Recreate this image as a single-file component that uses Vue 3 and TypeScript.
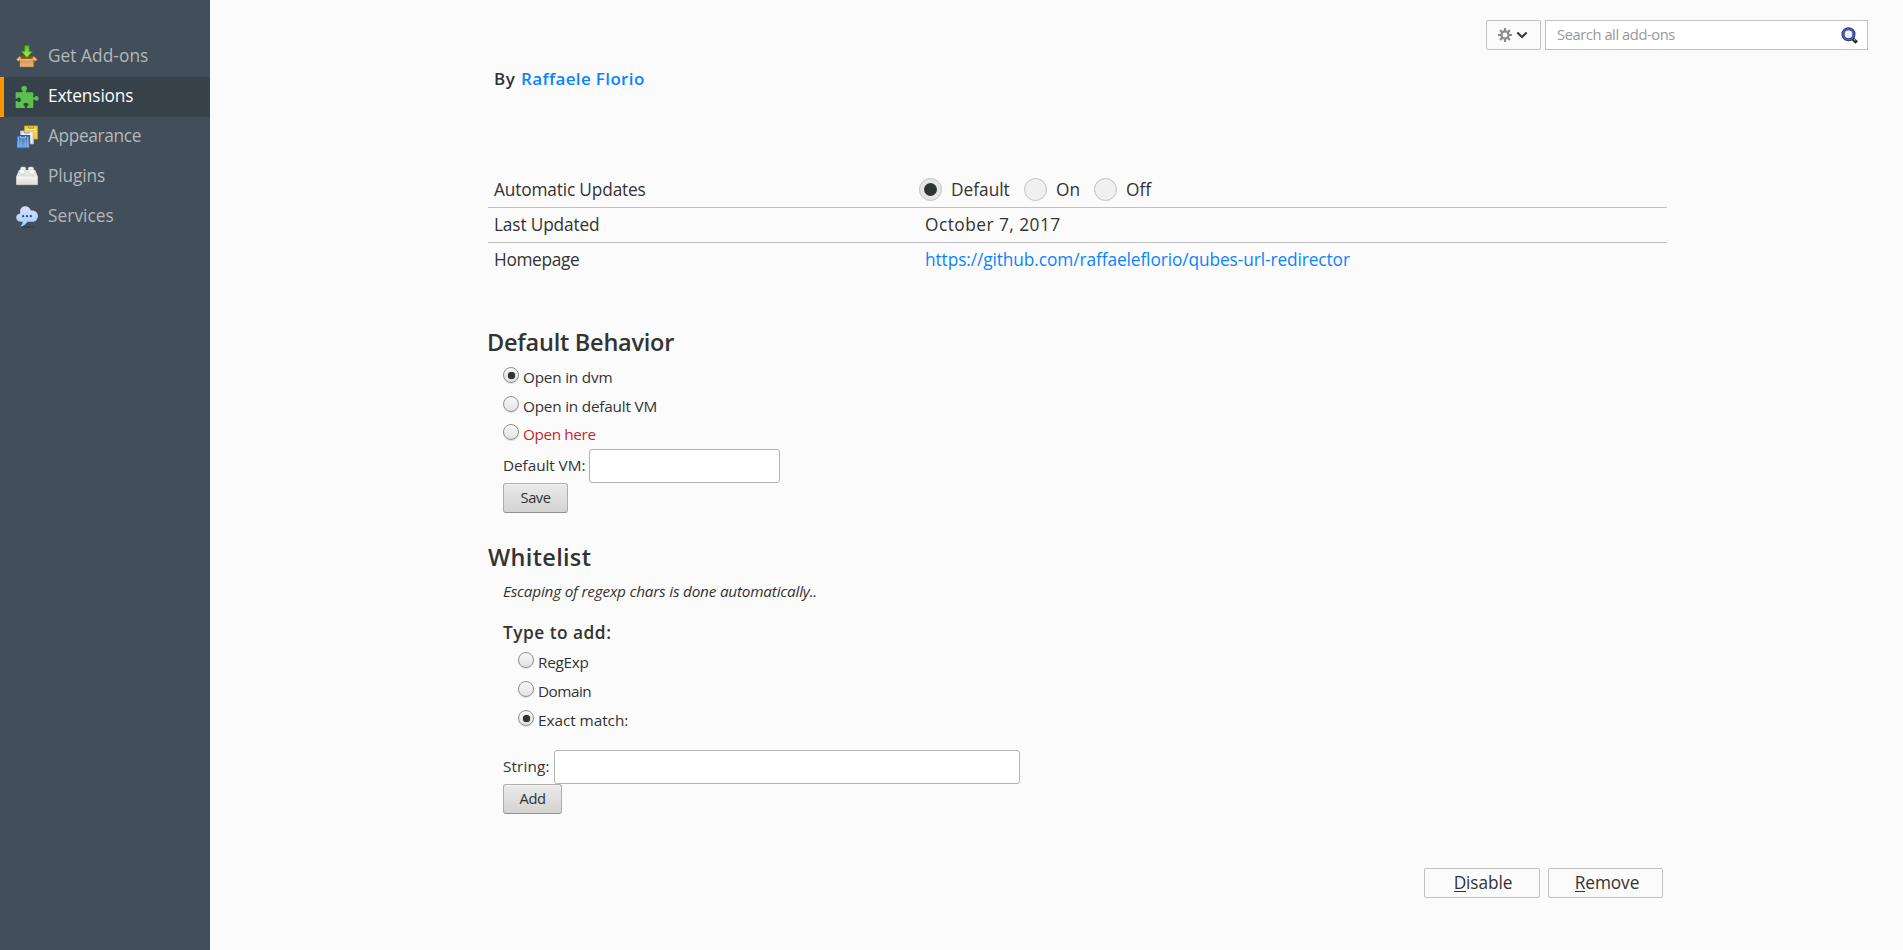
<script setup lang="ts">
import { ref } from 'vue'

interface Category {
  id: string
  label: string
}

interface Choice {
  id: string
  label: string
  danger?: boolean
}

const categories: Category[] = [
  { id: 'discover', label: 'Get Add-ons' },
  { id: 'extension', label: 'Extensions' },
  { id: 'theme', label: 'Appearance' },
  { id: 'plugin', label: 'Plugins' },
  { id: 'service', label: 'Services' },
]
const updateChoices: Choice[] = [
  { id: 'default', label: 'Default' },
  { id: 'on', label: 'On' },
  { id: 'off', label: 'Off' },
]
const behaviors: Choice[] = [
  { id: 'dvm', label: 'Open in dvm' },
  { id: 'vm', label: 'Open in default VM' },
  { id: 'here', label: 'Open here', danger: true },
]
const entryTypes: Choice[] = [
  { id: 'regexp', label: 'RegExp' },
  { id: 'domain', label: 'Domain' },
  { id: 'exact', label: 'Exact match:' },
]

const selected = ref('extension')
const updates = ref('default')
const behavior = ref('dvm')
const entryType = ref('exact')
const defaultVm = ref('')
const entry = ref('')
const query = ref('')
</script>

<template>
  <div class="page">
    <nav class="sidebar">
      <a
        v-for="c in categories"
        :key="c.id"
        class="category"
        :class="[c.id, { active: selected === c.id }]"
        @click="selected = c.id"
      >
        <svg class="cat-icon" viewBox="0 0 24 24">
          <defs>
            <linearGradient id="box" x1="0" y1="0" x2="0" y2="1">
              <stop offset="0" stop-color="#c98a45" /><stop offset="1" stop-color="#e9b877" />
            </linearGradient>
            <linearGradient id="arrow" x1="0" y1="0" x2="0" y2="1">
              <stop offset="0" stop-color="#5cc51d" /><stop offset="1" stop-color="#a5f25c" />
            </linearGradient>
            <linearGradient id="brick" x1="0" y1="0" x2="0" y2="1">
              <stop offset="0" stop-color="#f6f6f5" /><stop offset="1" stop-color="#dcdcda" />
            </linearGradient>
            <linearGradient id="cloud" x1="0" y1="0" x2="0" y2="1">
              <stop offset="0" stop-color="#d9dffc" /><stop offset="1" stop-color="#9fd0fb" />
            </linearGradient>
            <linearGradient id="blue" x1="0" y1="0" x2="0" y2="1">
              <stop offset="0" stop-color="#3d6fb0" /><stop offset="1" stop-color="#78a6dc" />
            </linearGradient>
          </defs>
          <g v-if="c.id === 'discover'">
            <ellipse cx="12" cy="22.300" rx="8.500" ry="1.200" fill="#2a333b" opacity=".5" />
            <path d="M4.500 11.500h14.500v10.700H4.500z" fill="url(#box)" stroke="#7d4c17" stroke-width=".8" />
            <path d="M5 11.800h13.500v2.400H5z" fill="#8a5520" />
            <path d="M4.600 11.300 1.200 14.800l2.400 1.500 2.600-3zM18.900 11.300l3.400 3.500-2.400 1.500-2.600-3z" fill="#efc288" stroke="#a46b2c" stroke-width=".6" />
            <path d="M5 14.200h13.500v1H5z" fill="#f2cb95" />
            <path d="M9.800.8h4.200v5.800h3.300L11.900 12.400 6.500 6.600h3.300z" fill="url(#arrow)" stroke="#48a512" stroke-width=".7" />
          </g>
          <path
            v-else-if="c.id === 'extension'"
            d="M1.500 7.200h6.100V5.900C6.900 5.300 6.300 4.600 6.300 3.500 6.300 1.900 7.500.7 9.200.7s2.900 1.200 2.900 2.800c0 1.100-.6 1.800-1.300 2.400v1.300h6.600c.6 0 .9.300.9.900v4.300h1.400c.5-.8 1.100-1.300 1.900-1.300 1.200 0 2 1 2 2.300s-.8 2.300-2 2.300c-.8 0-1.400-.5-1.900-1.300h-1.400v7.600c0 .6-.3.900-.9.900h-5.300v-1.700c.8-.4 1.400-.9 1.400-1.700 0-1.100-1.100-1.800-2.500-1.800s-2.500.7-2.500 1.800c0 .8.600 1.300 1.400 1.700v1.700H1.500c-.6 0-.9-.3-.9-.9v-6h1.700c.4.700.9 1.200 1.700 1.200 1.100 0 1.900-1 1.900-2.400s-.8-2.400-1.900-2.400c-.8 0-1.300.5-1.700 1.200H.600V8.100c0-.6.300-.9.900-.9z"
            fill="#5cc04e"
          />
          <g v-else-if="c.id === 'theme'">
            <path d="M9.500 1h13v13h-13z" fill="#f3cf3f" stroke="#d6a91d" stroke-width=".8" />
            <path d="M11 4.500h10M11 6.500h10" stroke="#fbeb9a" />
            <path d="M13.500 1.600v1.500h5V1.600" fill="none" stroke="#a98212" stroke-width=".8" />
            <path d="M5.500 6h13v13h-13z" fill="#dedfe0" stroke="#b7b9bb" stroke-width=".8" />
            <path d="M7 9h10M8 10v8M16 8v10" stroke="#fafafa" />
            <path d="M9.500 6.500V8h4.500V6.500" fill="none" stroke="#818588" stroke-width=".8" />
            <path d="M1.500 10.500h13.200v12.600H1.500z" fill="url(#blue)" stroke="#27528f" stroke-width=".9" />
            <path d="M3.500 12v10M12.700 12v10M6 14.500v7M10.200 14.500v7" stroke="#93bbe9" stroke-width=".8" />
            <path d="M5.500 11v1.800h5V11" fill="none" stroke="#c5dbf5" stroke-width=".8" />
          </g>
          <g v-else-if="c.id === 'plugin'">
            <path d="M4 5h16.200l2.300 6v8.500h-21V11z" fill="#e9e9e8" />
            <path d="M1.500 11h21v8.700h-21z" fill="url(#brick)" stroke="#c9c9c7" stroke-width=".6" />
            <g fill="#f9f9f8" stroke="#c4c4c2" stroke-width=".6">
              <rect x="5.500" y="2" width="5.400" height="4" rx="1.700" />
              <rect x="13.200" y="2" width="5.400" height="4" rx="1.700" />
              <rect x="4" y="4.600" width="6.400" height="4.400" rx="2" />
              <rect x="13.700" y="4.600" width="6.400" height="4.400" rx="2" />
            </g>
          </g>
          <g v-else>
            <ellipse cx="12.500" cy="22" rx="6.500" ry="1" fill="#28323a" opacity=".5" />
            <path d="M6 16.800C3 16.800 1.200 15 1.200 12.600c0-2.300 1.600-4 4-4.200C4.600 4.300 6.600 1.200 10.200 1.200c3 0 4.900 1.700 5.500 4.400 4-.7 7.200 1.900 7.200 5.300 0 3.400-2.300 5.900-5.900 5.900h-4.500c-1.300 2-3.600 4.500-7.500 4.900 1.700-1.400 2.700-3 2.700-4.900z" fill="url(#cloud)" />
            <g fill="#1d4f8c"><circle cx="8.200" cy="11.200" r="1.150" /><circle cx="12" cy="11.200" r="1.150" /><circle cx="15.800" cy="11.200" r="1.150" /></g>
          </g>
        </svg>
        <span class="cat-label">{{ c.label }}</span>
      </a>
    </nav>

    <main class="main">
      <header class="toolbar">
        <button class="tools" type="button">
          <svg class="gear" viewBox="0 0 14 14">
            <g stroke="#8b8e8f" stroke-width="2.200">
              <path d="M7 0v3M7 11v3M0 7h3M11 7h3M2.100 2.100l2.100 2.100M9.800 9.800l2.100 2.100M11.900 2.100 9.800 4.200M4.200 9.800l-2.100 2.100" />
            </g>
            <circle cx="7" cy="7" r="3.600" fill="none" stroke="#8b8e8f" stroke-width="2.300" />
          </svg>
          <svg class="chevron" viewBox="0 0 12 8">
            <path d="M1.300 1.500 6 6l4.700-4.500" fill="none" stroke="#33393c" stroke-width="2.100" />
          </svg>
        </button>
        <div class="search">
          <input v-model="query" class="search-input" type="text" placeholder="Search all add-ons" />
          <svg class="glass" viewBox="0 0 17 17">
            <path d="m11 11 4.700 4.500" stroke="#222" stroke-width="3.400" />
            <path d="m12.800 12 1.600 1.500" stroke="#b5a276" stroke-width="1.400" />
            <circle cx="7.500" cy="7.300" r="5.500" fill="#eceef3" stroke="#22307e" stroke-width="3" />
            <circle cx="7.500" cy="7.300" r="5.500" fill="none" stroke="#4a63bd" stroke-width="1.400" />
          </svg>
        </div>
      </header>

      <section class="detail">
        <div class="creator"><span class="by">By</span><a class="author">Raffaele Florio</a></div>

        <div class="rows">
          <div class="row first">
            <span class="row-label">Automatic Updates</span>
            <div class="update-group">
              <label v-for="u in updateChoices" :key="u.id" class="update" :class="u.id" @click="updates = u.id">
                <i class="big-radio" :class="{ checked: updates === u.id }"></i>
                <span>{{ u.label }}</span>
              </label>
            </div>
          </div>
          <div class="row">
            <span class="row-label">Last Updated</span>
            <span class="date">October 7, 2017</span>
          </div>
          <div class="row last">
            <span class="row-label homepage">Homepage</span>
            <a class="link">https://github.com/raffaeleflorio/qubes-url-redirector</a>
          </div>
        </div>

        <h2 class="title behavior-title">Default Behavior</h2>
        <div class="form">
          <label v-for="b in behaviors" :key="b.id" class="option" :class="{ danger: b.danger }" @click="behavior = b.id">
            <i class="radio" :class="{ checked: behavior === b.id }"></i>
            <span>{{ b.label }}</span>
          </label>
          <div class="field">
            <label class="field-label vm-label">Default VM:</label>
            <input v-model="defaultVm" class="text vm" type="text" />
          </div>
          <button class="push save" type="button">Save</button>
        </div>

        <h2 class="title whitelist-title">Whitelist</h2>
        <div class="form">
          <p class="note">Escaping of regexp chars is done automatically..</p>
          <h3 class="subtitle">Type to add:</h3>
          <div class="types">
            <label v-for="t in entryTypes" :key="t.id" class="option" :class="t.id" @click="entryType = t.id">
              <i class="radio" :class="{ checked: entryType === t.id }"></i>
              <span>{{ t.label }}</span>
            </label>
          </div>
          <div class="field">
            <label class="field-label string-label">String:</label>
            <input v-model="entry" class="text string" type="text" />
          </div>
          <button class="push add" type="button">Add</button>
        </div>

        <footer class="actions">
          <button class="action disable" type="button"><span><span class="key">D</span>isable</span></button>
          <button class="action remove" type="button"><span><span class="key">R</span>emove</span></button>
        </footer>
      </section>
    </main>
  </div>
</template>

<style>
html,
body {
  margin: 0;
  background: #fbfbfb;
}
</style>

<style scoped>
.page {
  display: flex;
  height: 950px;
  overflow: hidden;
  background: #fbfbfb;
  color: #333;
  font-family: 'Open Sans', 'Noto Sans', sans-serif;
  font-size: 17.3px;
}
.page * {
  box-sizing: border-box;
}
button,
input {
  margin: 0;
  font-family: inherit;
  color: inherit;
  outline: none;
}
.sidebar {
  width: 210px;
  flex: none;
  padding-top: 37px;
  background: #424f5a;
}
.category {
  display: flex;
  align-items: center;
  height: 40px;
  padding-left: 11px;
  border-left: 4px solid transparent;
  color: #b3b7ba;
  letter-spacing: 0.05px;
}
.category.active {
  background: #36414a;
  border-left-color: #ff9500;
  color: #fbfbfb;
}
.cat-icon {
  width: 24px;
  height: 24px;
  margin-right: 9px;
}
.cat-label {
  padding-bottom: 3px;
}
.extension {
  letter-spacing: -0.16px;
}
.theme {
  letter-spacing: -0.36px;
}
.plugin {
  letter-spacing: -0.1px;
}

.main {
  flex: 1;
}
.toolbar {
  display: flex;
  justify-content: flex-end;
  gap: 4px;
  height: 50px;
  padding: 20px 35px 0 0;
}
.tools {
  display: flex;
  align-items: center;
  width: 55px;
  height: 30px;
  padding: 0 0 0 11px;
  border: 1px solid #c1c1c1;
  border-radius: 2px;
  background: #fbfbfb;
}
.gear {
  width: 14px;
  height: 14px;
}
.chevron {
  width: 12px;
  height: 8px;
  margin-left: 4px;
}
.search {
  display: flex;
  align-items: center;
  width: 323px;
  height: 30px;
  padding: 0 9px 0 11px;
  border: 1px solid #c1c1c1;
  background: #fff;
}
.search-input {
  flex: 1;
  height: 28px;
  padding: 0 0 2px;
  border: 0;
  background: transparent;
  font-size: 14.7px;
  letter-spacing: -0.42px;
}
.search-input::placeholder {
  color: #999;
  opacity: 1;
}
.glass {
  width: 17px;
  height: 17px;
}

.detail {
  width: 1179px;
  margin: 22px 0 0 278px;
}
.creator {
  display: flex;
  height: 20px;
  padding-left: 6px;
  overflow: hidden;
  font-size: 17px;
  font-weight: 600;
  line-height: 13px;
}
.by {
  width: 27px;
  letter-spacing: 0.6px;
}
.author {
  color: #0a84ff;
  letter-spacing: 0.36px;
}
.rows {
  margin-top: 81px;
}
.row {
  display: grid;
  grid-template-columns: 431px 1fr;
  height: 35px;
  padding-left: 6px;
  border-bottom: 1px solid #c1c1c1;
  line-height: 33px;
}
.row.last {
  border-bottom: 0;
}
.row-label {
  letter-spacing: -0.16px;
}
.homepage {
  letter-spacing: -0.35px;
}
.date {
  letter-spacing: 0.48px;
}
.link {
  color: #0a84ff;
  letter-spacing: -0.09px;
}
.update-group {
  display: flex;
  margin-left: -6px;
}
.update {
  display: flex;
  align-items: center;
  height: 33px;
}
.update.default {
  width: 105px;
}
.update.on {
  width: 70px;
}
.big-radio {
  display: flex;
  align-items: center;
  justify-content: center;
  width: 23px;
  height: 23px;
  margin-right: 9px;
  border: 1px solid #c1c1c1;
  border-radius: 50%;
  background: #f0f0f0;
}
.big-radio.checked {
  background: #e6e6e6;
}
.big-radio.checked::after {
  content: '';
  width: 13px;
  height: 13px;
  border-radius: 50%;
  background: #2e3436;
}

.title {
  margin: 0;
  height: 30px;
  line-height: 30px;
  font-size: 23.5px;
  font-weight: 600;
}
.behavior-title {
  margin: 49px 0 6px -1px;
  letter-spacing: -0.24px;
}
.whitelist-title {
  margin: 29px 0 6px;
  letter-spacing: 0.32px;
}
.form {
  padding-left: 15px;
  font-size: 15.3px;
}
.option {
  display: flex;
  align-items: center;
  height: 29px;
  letter-spacing: -0.2px;
}
.option span {
  padding-bottom: 2px;
}
.option.danger {
  height: 28px;
  color: #c4262e;
  letter-spacing: -0.37px;
}
.radio {
  display: flex;
  align-items: center;
  justify-content: center;
  width: 16px;
  height: 16px;
  margin: 0 4px 5px 0;
  border: 1px solid #8f918c;
  border-radius: 50%;
  background: linear-gradient(#f8f8f8, #e2e2e1);
  box-shadow: 0 1px 1px rgba(0, 0, 0, 0.12);
}
.danger .radio {
  margin-bottom: 6px;
}
.radio.checked::after {
  content: '';
  width: 7px;
  height: 7px;
  border-radius: 50%;
  background: #2e3436;
  box-shadow: 0 0 1px #2e3436;
}
.field {
  display: flex;
  align-items: center;
  height: 34px;
}
.field-label {
  padding-bottom: 2px;
}
.vm-label {
  width: 86px;
  letter-spacing: -0.05px;
}
.string-label {
  width: 51px;
  letter-spacing: 0.14px;
}
.text {
  height: 34px;
  padding: 0 6px;
  border: 1px solid #b4b4b2;
  border-radius: 3px;
  background: #fff;
  font-size: 15.3px;
}
.vm {
  width: 191px;
}
.string {
  width: 466px;
}
.push {
  display: block;
  height: 30px;
  padding: 0 0 2px;
  border: 1px solid #adada9;
  border-bottom-color: #8f918c;
  border-radius: 3px;
  background: linear-gradient(#eaeaea, #d3d3d2);
  box-shadow: inset 0 1px #f3f3f3;
  font-size: 14.7px;
  line-height: 26px;
  color: #2e3436;
  letter-spacing: -0.5px;
}
.save {
  width: 65px;
}
.add {
  width: 59px;
}
.note {
  margin: 0;
  height: 27px;
  line-height: 27px;
  font-style: italic;
  letter-spacing: -0.2px;
}
.subtitle {
  margin: 15px 0 0;
  height: 28px;
  line-height: 26px;
  font-size: 17.3px;
  font-weight: 600;
  letter-spacing: 0.5px;
}
.types {
  height: 102px;
  padding-left: 15px;
}
.option.regexp {
  letter-spacing: -0.27px;
}
.option.domain {
  letter-spacing: -0.5px;
}
.option.exact {
  letter-spacing: -0.03px;
}
.actions {
  display: flex;
  justify-content: flex-end;
  gap: 8px;
  margin-top: 54px;
  padding-right: 4px;
}
.action {
  height: 30px;
  padding: 0 0 0 2px;
  border: 1px solid #c1c1c1;
  border-radius: 2px;
  background: #fbfbfb;
  font-size: 17.3px;
  line-height: 28px;
  letter-spacing: -0.1px;
}
.disable {
  width: 116px;
}
.remove {
  width: 115px;
  padding-left: 3px;
}
.key {
  display: inline-block;
  height: 23px;
  line-height: 28px;
  border-bottom: 1px solid #333;
}
</style>
